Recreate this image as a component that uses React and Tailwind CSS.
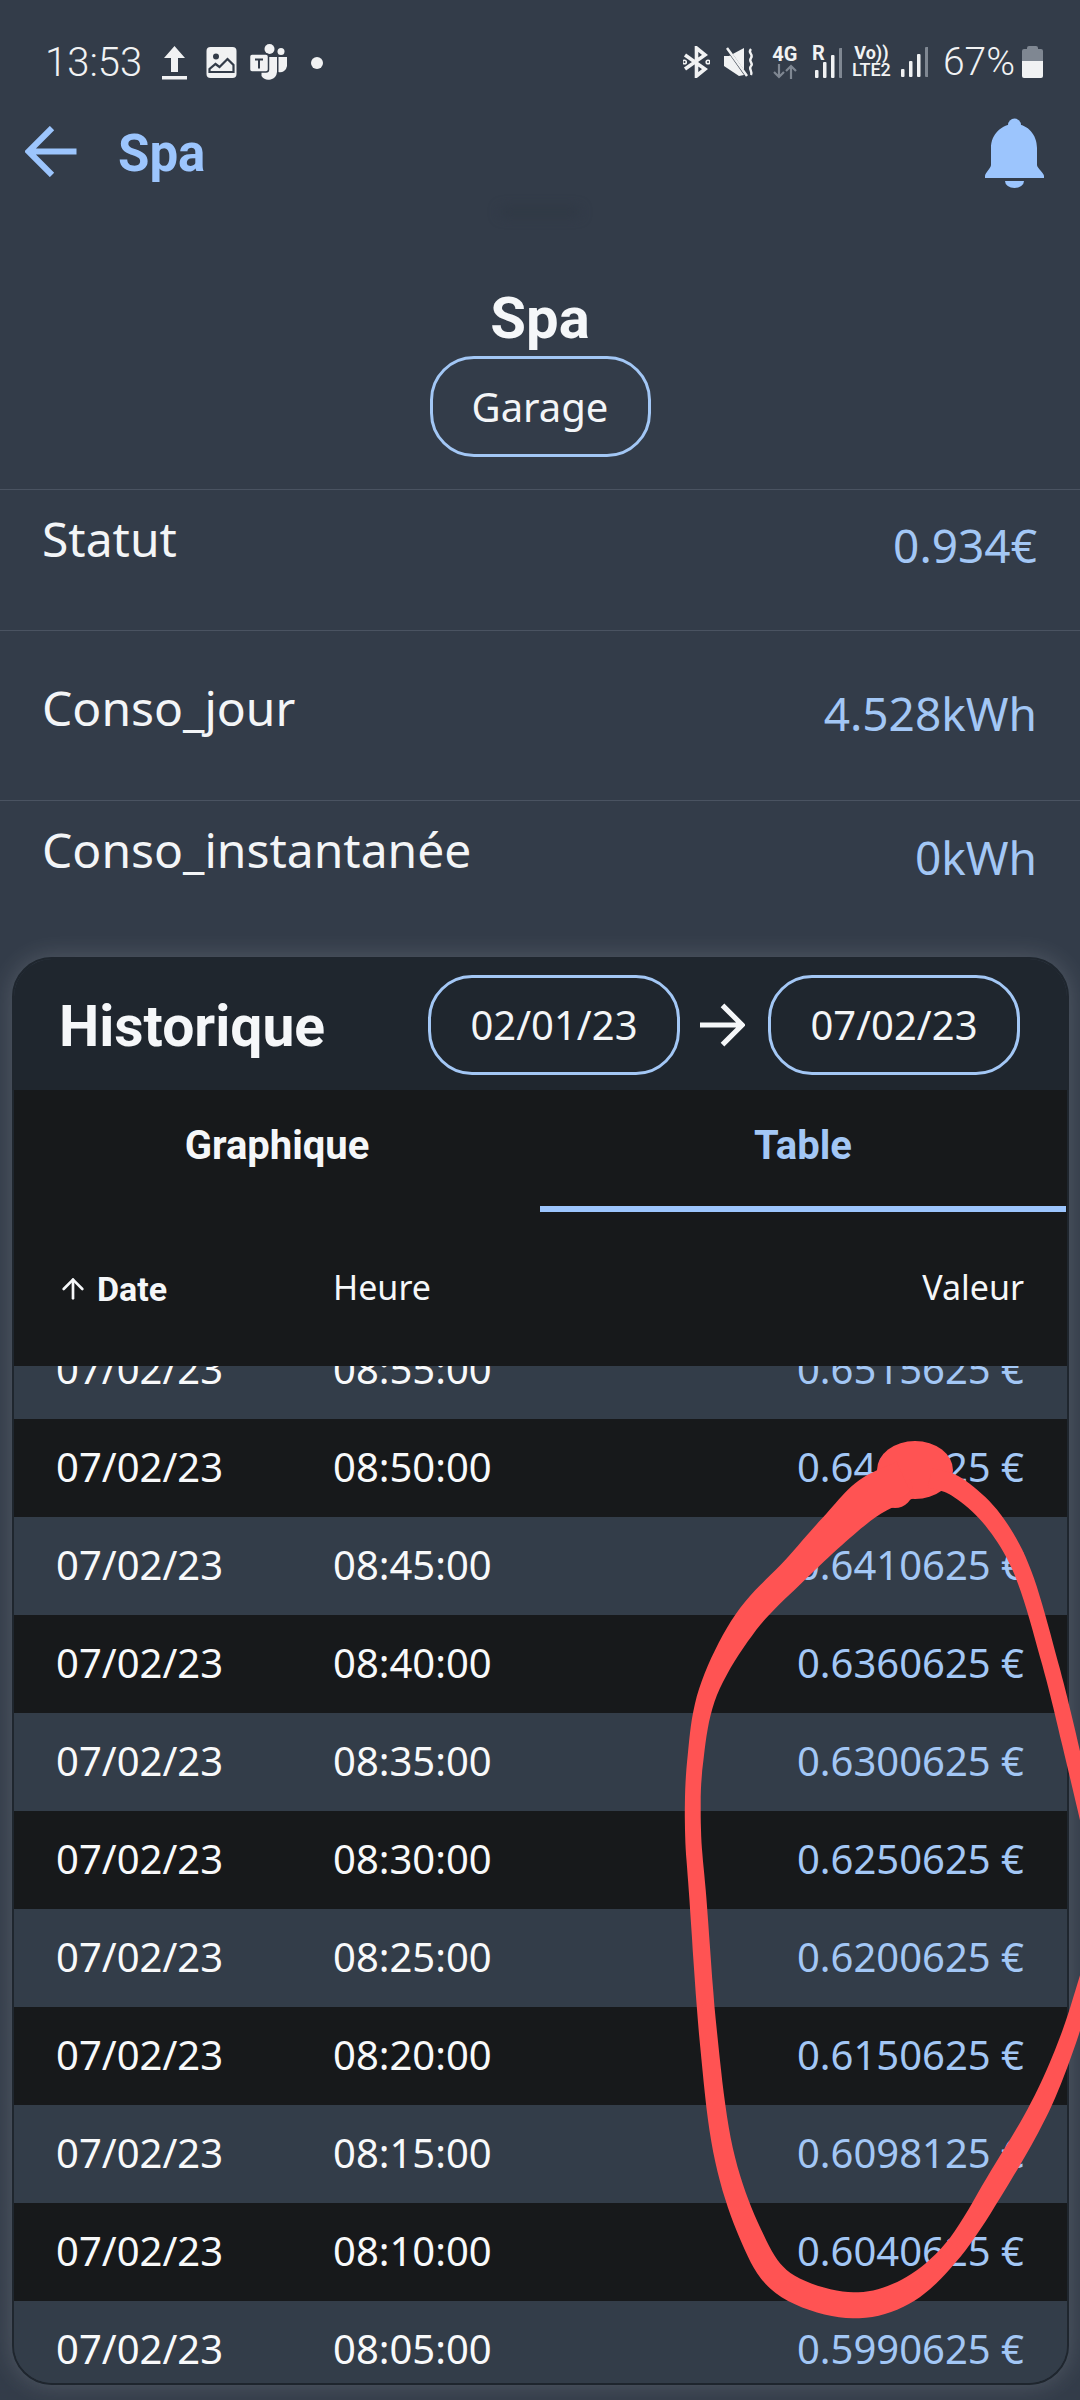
import { ArrowUp } from "lucide-react";

const rows = [
  ["08:55:00", "0.6515625 €"],
  ["08:50:00", "0.6460625 €"],
  ["08:45:00", "0.6410625 €"],
  ["08:40:00", "0.6360625 €"],
  ["08:35:00", "0.6300625 €"],
  ["08:30:00", "0.6250625 €"],
  ["08:25:00", "0.6200625 €"],
  ["08:20:00", "0.6150625 €"],
  ["08:15:00", "0.6098125 €"],
  ["08:10:00", "0.6040625 €"],
  ["08:05:00", "0.5990625 €"],
];

// hand drawn circle: [x, y, width] along the stroke
const circleLeft = [
  [905, 1480, 40], [870, 1497, 40], [838, 1526, 34], [795, 1570, 28],
  [746, 1622, 26], [708, 1692, 19], [695, 1763, 16], [693, 1830, 16], [698, 1900, 17], [708, 2033, 18],
  [723, 2150, 20], [750, 2233, 23], [783, 2283, 25], [847, 2305, 26], [903, 2293, 25], [953, 2250, 20],
  [1000, 2177, 22], [1040, 2107, 20], [1068, 2040, 17], [1090, 1970, 16],
];
const circleRight = [
  [930, 1478, 20], [957, 1487, 20], [993, 1520, 19], [1023, 1573, 17], [1050, 1663, 16], [1068, 1735, 16], [1090, 1830, 15],
];

// catmull-rom through the points, then walk both sides to get a filled shape
const brushPath = (pts) => {
  const smooth = [];
  for (let i = 0; i < pts.length - 1; i++) {
    const p0 = pts[Math.max(i - 1, 0)];
    const p1 = pts[i];
    const p2 = pts[i + 1];
    const p3 = pts[Math.min(i + 2, pts.length - 1)];
    for (let s = 0; s < 10; s++) {
      const t = s / 10;
      smooth.push(
        [0, 1, 2].map((k) =>
          0.5 * (2 * p1[k] + (p2[k] - p0[k]) * t + (2 * p0[k] - 5 * p1[k] + 4 * p2[k] - p3[k]) * t * t + (3 * p1[k] - p0[k] - 3 * p2[k] + p3[k]) * t * t * t)
        )
      );
    }
  }
  smooth.push(pts[pts.length - 1]);
  const a = [];
  const b = [];
  smooth.forEach((p, i) => {
    const prev = smooth[Math.max(i - 1, 0)];
    const next = smooth[Math.min(i + 1, smooth.length - 1)];
    const dx = next[0] - prev[0];
    const dy = next[1] - prev[1];
    const len = Math.hypot(dx, dy) || 1;
    const nx = (-dy / len) * (p[2] / 2);
    const ny = (dx / len) * (p[2] / 2);
    a.push(`${(p[0] + nx).toFixed(1)} ${(p[1] + ny).toFixed(1)}`);
    b.unshift(`${(p[0] - nx).toFixed(1)} ${(p[1] - ny).toFixed(1)}`);
  });
  return `M${a.join("L")}L${b.join("L")}Z`;
};

const Signal = ({ className }) => (
  <svg viewBox="0 0 27 30" className={className} fill="#f1f2f3">
    <rect x="0" y="22" width="3.5" height="8" rx="1" />
    <rect x="8" y="14" width="3.5" height="16" rx="1" />
    <rect x="16" y="7" width="3.5" height="23" rx="1" />
    <rect x="24" y="0" width="3.5" height="30" rx="1" fill="#7f8792" />
  </svg>
);

const StatusBar = () => (
  <div className="flex h-[100px] items-start justify-between pl-[45px] pr-[37px] pt-[44px] text-[#f1f2f3]">
    <div className="flex items-center">
      <span className="font-['Roboto'] text-[40px] leading-[36px] font-light">13:53</span>
      <svg viewBox="0 0 25 34" className="ml-[20px] h-[34px] w-[25px]" fill="#f1f2f3">
        <path d="M12.5 0 23 12h-7v14H9V12H2z" />
        <rect x="0" y="30" width="25" height="3.5" />
      </svg>
      <svg viewBox="0 0 30 31" className="ml-[19px] h-[31px] w-[31px]">
        <path fillRule="evenodd" fill="#f1f2f3" d="M4 0h22a4 4 0 0 1 4 4v23a4 4 0 0 1-4 4H4a4 4 0 0 1-4-4V4a4 4 0 0 1 4-4z" />
        <circle cx="9.5" cy="9.5" r="3" fill="#333c49" />
        <path d="M3 25v-3l6-5 4 3 8-8 6 6v7z" fill="none" stroke="#333c49" strokeWidth="2.2" />
      </svg>
      <svg viewBox="0 0 38 37" className="ml-[12px] h-[37px] w-[39px]" fill="#f1f2f3">
        <circle cx="20" cy="5" r="5" />
        <circle cx="31.5" cy="7.5" r="3.5" />
        <path d="M29 13h8.5v9a7 7 0 0 1-8.5 6z" />
        <path d="M12 13h15.5v15a8.5 8.5 0 0 1-15.5 4z" />
        <rect x="0" y="10" width="19" height="18" rx="2.5" stroke="#333c49" strokeWidth="1.5" />
        <path d="M5.5 14.500h8v2h-3v8h-2v-8h-3z" fill="#333c49" />
      </svg>
      <span className="ml-[23px] h-[12px] w-[12px] rounded-full bg-[#f1f2f3]" />
    </div>
    <div className="flex items-center">
      <svg viewBox="0 0 27 32" className="h-[32px] w-[27px]" fill="none" stroke="#f1f2f3" strokeWidth="3.600">
        <path d="M2 9 22 23l-8.500 7V2L22 9 2 23" />
        <circle cx="1.500" cy="16" r="0.800" />
        <circle cx="25" cy="16" r="0.800" />
      </svg>
      <svg viewBox="0 0 30 30" className="ml-[14px] h-[30px] w-[30px]">
        <path d="M0 9h5L20 1v27L15 29 0 19z" fill="#f1f2f3" />
        <path d="M2 0 21 27" stroke="#333c49" strokeWidth="3" />
        <path d="M3 1 23 29" stroke="#f1f2f3" strokeWidth="2.500" />
        <path d="M27 2c-4 4 3 5 0 9s3 5 0 8 2 5 0 9" fill="none" stroke="#f1f2f3" strokeWidth="2.400" />
      </svg>
      <div className="ml-[18px] flex w-[26px] flex-col items-center">
        <span className="font-['Roboto'] text-[20px] leading-[18px] font-bold">4G</span>
        <svg viewBox="0 0 26 15" className="mt-[1px] h-[15px] w-[26px]" fill="none" stroke="#7f8792" strokeWidth="2.200">
          <path d="M7 0v13M2 8l5 5 5-5M19 15V2M14 7l5-5 5 5" />
        </svg>
      </div>
      <div className="relative ml-[14px] h-[32px] w-[30px]">
        <span className="absolute -top-[3px] left-0 font-['Roboto'] text-[20px] leading-[20px] font-bold">R</span>
        <Signal className="absolute right-0 bottom-0 h-[30px] w-[27px]" />
      </div>
      <div className="ml-[9px] flex w-[41px] flex-col items-center">
        <span className="font-['Roboto'] text-[18px] leading-[16px] font-bold whitespace-nowrap">Vo))</span>
        <span className="font-['Roboto'] text-[18px] leading-[18px] font-medium">LTE2</span>
      </div>
      <Signal className="ml-[9px] h-[30px] w-[27px]" />
      <span className="ml-[15px] font-['Roboto'] text-[39px] leading-[36px] font-light">67%</span>
      <svg viewBox="0 0 21 32" className="ml-[7px] h-[32px] w-[21px]">
        <path d="M7 0h7a2 2 0 0 1 2 2v1h3a2 2 0 0 1 2 2v10H0V5a2 2 0 0 1 2-2h3V2a2 2 0 0 1 2-2z" fill="#7f8792" />
        <path d="M0 15h21v15a2 2 0 0 1-2 2H2a2 2 0 0 1-2-2z" fill="#f1f2f3" />
      </svg>
    </div>
  </div>
);

const AppBar = () => (
  <div className="flex h-[90px] items-start pl-[25px] pr-[36px]">
    <svg viewBox="0 0 50 50" className="mt-[26px] h-[51px] w-[52px]" fill="none" stroke="#9cc5fd" strokeWidth="6">
      <path d="M50 25H4M26 2 3 25l23 23" />
    </svg>
    <span className="mt-[26px] ml-[41px] font-['Roboto'] text-[51px] leading-[56px] font-bold text-[#9cc5fd]">Spa</span>
    <svg viewBox="0 0 59 70" className="mt-[18px] ml-auto h-[70px] w-[59px]" fill="#9cc5fd">
      <circle cx="29.500" cy="7" r="6.500" />
      <path d="M29.500 6C42 6 52 16 52 30v17c0 3 7 8 7 11v2H0v-2c0-3 6-8 6-11V30C6 16 17 6 29.500 6z" />
      <path d="M20 63h19a9.500 7 0 0 1-19 0z" />
    </svg>
  </div>
);

const Stat = ({ label, value, height, labelTop, valueTop }) => (
  <div className="flex border-t border-[#4a5361] pl-[42px] pr-[43px] font-['Noto_Sans']" style={{ height }}>
    <span className="text-[48px] leading-[60px] text-[#f3f5f7]" style={{ marginTop: labelTop }}>{label}</span>
    <span className="ml-auto text-[46px] leading-[60px] text-[#a3c7f5]" style={{ marginTop: valueTop }}>{value}</span>
  </div>
);

const DateChip = ({ children }) => (
  <div className="flex h-[100px] w-[252px] items-center justify-center rounded-[44px] border-[3px] border-[#a3c7f5] text-[40px] text-[#f3f5f7]">
    {children}
  </div>
);

const Historique = () => (
  <div className="ml-3 flex h-[1428px] w-[1057px] flex-col overflow-hidden rounded-[40px] border-2 border-[#1f262e] shadow-[0_0_26px_rgba(255,255,255,0.16)] font-['Noto_Sans']">
    <div className="flex h-[131px] shrink-0 items-start bg-[#1f262e] pl-[45px] pr-[47px] pt-[16px]">
      <span className="mt-[20px] font-['Roboto'] text-[57px] leading-[64px] font-bold text-[#f5f7f9]">Historique</span>
      <div className="ml-auto flex items-center">
        <DateChip>02/01/23</DateChip>
        <svg viewBox="0 0 48 46" className="mr-[23px] ml-[20px] h-[46px] w-[45px]" fill="none" stroke="#f5f7f9" strokeWidth="5.500">
          <path d="M0 23h44M24 2l21 21-21 21" />
        </svg>
        <DateChip>07/02/23</DateChip>
      </div>
    </div>
    <div className="flex h-[122px] shrink-0 bg-[#17191b] font-['Roboto'] text-[40px] font-bold">
      <div className="flex w-[526px] justify-center pt-[32px] leading-[48px] text-[#f5f7f9]">Graphique</div>
      <div className="flex w-[526px] justify-center border-b-[6px] border-[#9cc5fd] pt-[32px] leading-[48px] text-[#a3c7f5]">Table</div>
    </div>
    <div className="flex h-[154px] shrink-0 items-center bg-[#17191b] pb-[4px] pl-[44px] pr-[43px] text-[34px] text-[#f5f7f9]">
      <div className="flex w-[275px] items-center pt-[4px] font-['Roboto'] font-bold">
        <ArrowUp className="-ml-[1px] mr-[8px] h-[32px] w-[32px]" strokeWidth={2} />
        Date
      </div>
      <span>Heure</span>
      <span className="ml-auto">Valeur</span>
    </div>
    <div className="min-h-0 flex-1 overflow-hidden">
      <div className="-mt-[45px]">
        {rows.map(([time, value], i) => (
          <div key={time} className={i % 2 === 0 ? "flex h-[98px] items-center bg-[#333d49] pb-[2px] pl-[42px] pr-[43px] text-[40px]" : "flex h-[98px] items-center bg-[#17191b] pb-[2px] pl-[42px] pr-[43px] text-[40px]"}>
            <span className="w-[277px] text-[#f8f9fa]">07/02/23</span>
            <span className="text-[#f8f9fa]">{time}</span>
            <span className="ml-auto text-[#a3c7f5]">{value}</span>
          </div>
        ))}
      </div>
    </div>
  </div>
);

export default function App() {
  return (
    <div className="relative h-[2400px] w-[1080px] overflow-hidden bg-[#333c49]">
      <StatusBar />
      <AppBar />
      <div className="flex h-[299px] flex-col items-center pt-[96px] font-['Noto_Sans']">
        <span className="font-['Roboto'] text-[58px] leading-[64px] font-bold text-[#f5f7f9]">Spa</span>
        <div className="mt-[6px] flex h-[101px] w-[221px] items-center justify-center rounded-[44px] border-[3px] border-[#a3c7f5] text-[40px] text-[#f3f5f7]">
          Garage
        </div>
      </div>
      <Stat label="Statut" value="0.934€" height={141} labelTop={19} valueTop={25} />
      <Stat label="Conso_jour" value="4.528kWh" height={170} labelTop={47} valueTop={52} />
      <Stat label="Conso_instantanée" value="0kWh" height={157} labelTop={19} valueTop={26} />
      <Historique />
      <div className="absolute top-[208px] left-[500px] h-[8px] w-[80px] rounded-full bg-[#2f3844] blur-[6px]" />
      {/* red marker drawn on top of the screenshot */}
      <svg viewBox="0 0 1080 2400" className="pointer-events-none absolute inset-0 h-[2400px] w-[1080px]" fill="#ff5353">
        <ellipse cx="915" cy="1470" rx="38" ry="29" />
        <circle cx="895" cy="1490" r="18" />
        <path d={brushPath(circleLeft)} />
        <path d={brushPath(circleRight)} />
      </svg>
    </div>
  );
}
